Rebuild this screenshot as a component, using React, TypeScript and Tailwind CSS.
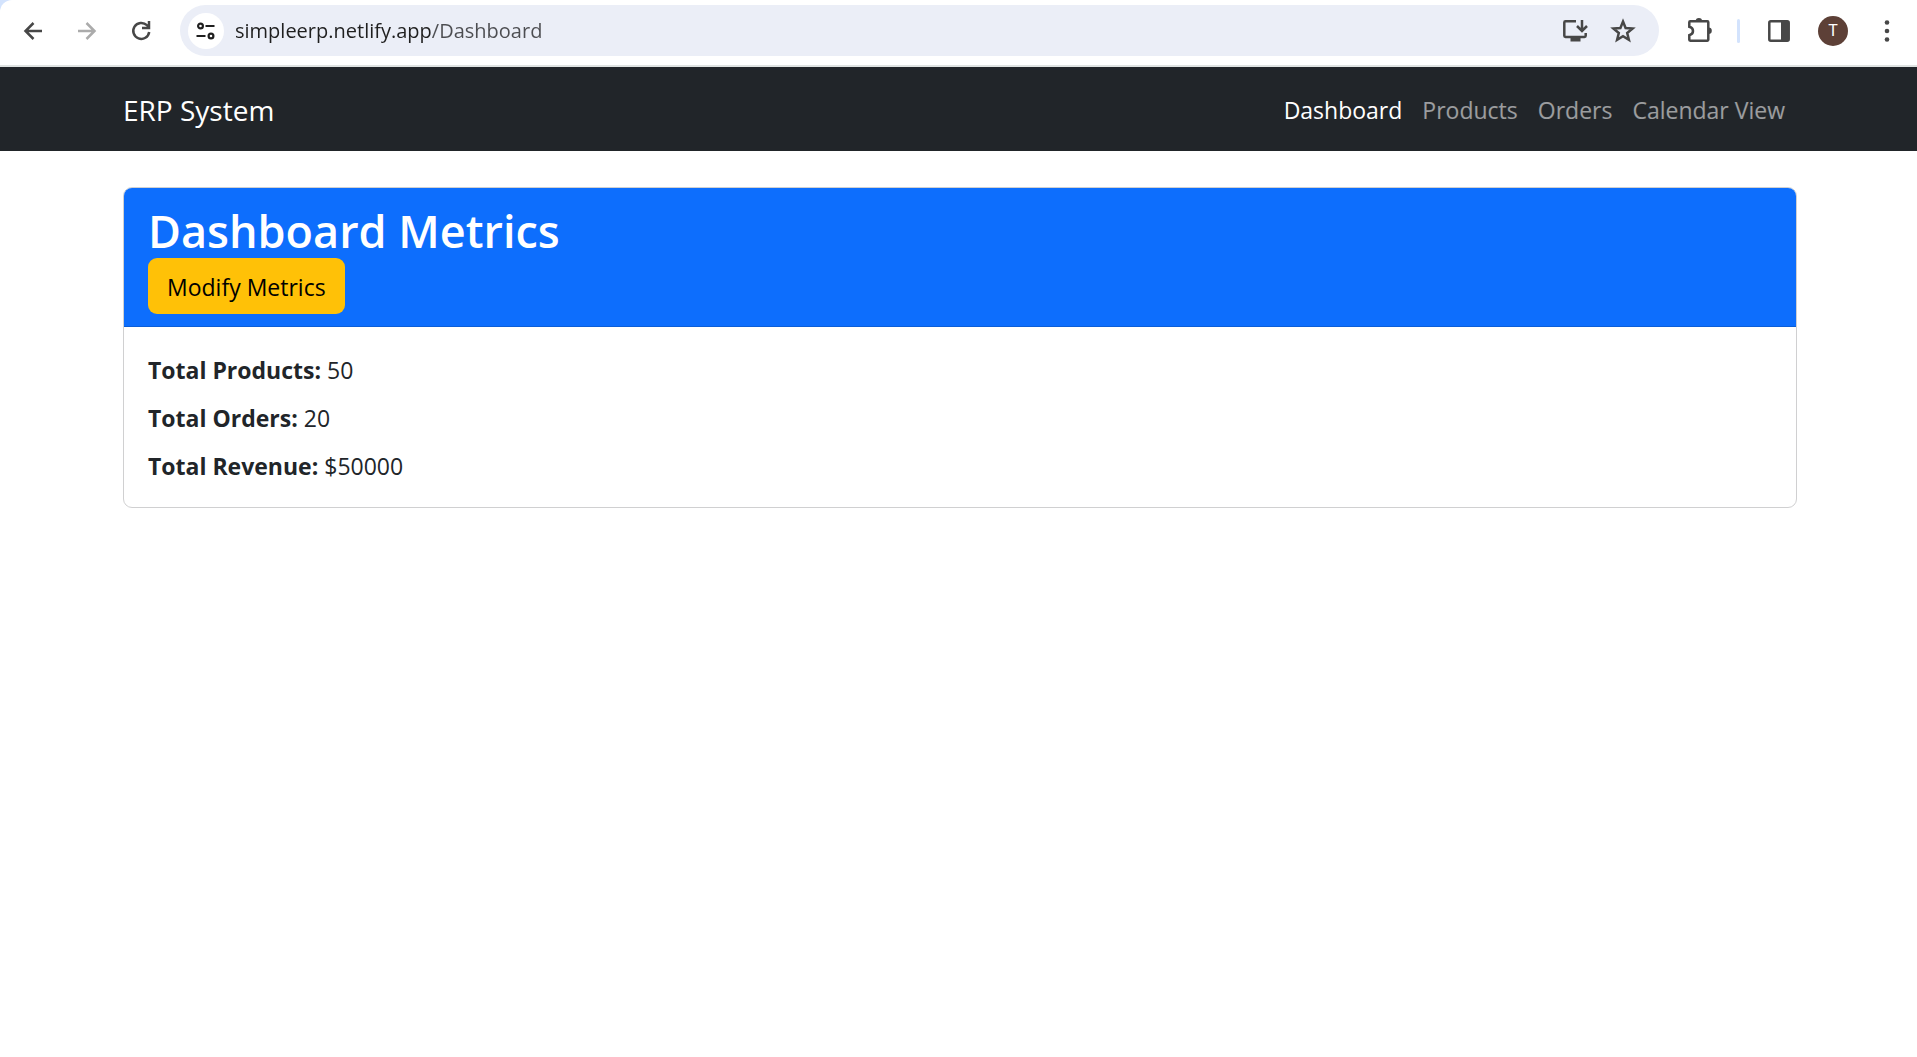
import React from "react";

const iconButton =
  "flex size-9 shrink-0 items-center justify-center rounded-full text-[#474747] hover:bg-black/5";

function BackIcon() {
  return (
    <svg width="20" height="20" viewBox="0 0 20 20" fill="none" stroke="currentColor" strokeWidth="2.5">
      <path d="M19 10H3M10.5 2l-8 8 8 8" />
    </svg>
  );
}

function ForwardIcon() {
  return (
    <svg width="20" height="20" viewBox="0 0 20 20" fill="none" stroke="currentColor" strokeWidth="2.5">
      <path d="M1 10h16M9.5 2l8 8-8 8" />
    </svg>
  );
}

function ReloadIcon() {
  return (
    <svg width="22" height="22" viewBox="0 0 22 22" fill="none" stroke="currentColor" strokeWidth="2.5">
      <path d="M19.200 12a8 8 0 1 1-2.300-6.800l1.600 1.800" />
      <path d="M19 1v7h-7" />
    </svg>
  );
}

function TuneIcon() {
  return (
    <svg width="20" height="20" viewBox="0 0 20 20" fill="none" stroke="currentColor" strokeWidth="2.2">
      <circle cx="4.500" cy="5" r="2.400" />
      <circle cx="15" cy="15" r="2.400" />
      <path d="M9.500 5h9M.5 15h9" />
    </svg>
  );
}

function InstallIcon() {
  return (
    <svg width="26" height="24" viewBox="0 0 26 24" fill="none" stroke="currentColor" strokeWidth="2.5">
      <path d="M14 2.300H3.500q-1.200 0-1.200 1.200v13.200q0 1.200 1.200 1.200h19q1.200 0 1.200-1.200V14" />
      <path d="M20 1v10M15 7l5 5 5-5" />
      <path d="M8.500 18h10v4.500h-10z" fill="currentColor" stroke="none" />
    </svg>
  );
}

function StarIcon() {
  return (
    <svg width="26" height="26" viewBox="0 0 26 26" fill="none" stroke="currentColor" strokeWidth="2.5">
      <path d="M13 3.500l2.600 6.500 7 .5-5.400 4.500 1.700 6.800L13 18.200l-5.900 3.600 1.700-6.800-5.400-4.500 7-.5z" />
    </svg>
  );
}

function ExtensionsIcon() {
  return (
    <svg width="26" height="26" viewBox="0 0 26 26" fill="none" stroke="currentColor" strokeWidth="2.5">
      <path d="M2.300 4.200q0-.9.900-.9h17.200q.9 0 .9.900v17.600q0 .9-.9.900H3.200q-.9 0-.9-.9v-4.600q3.700-1 3.700-4.200t-3.700-4.200z" />
      <path d="M8.700 3a3.200 3 0 0 1 6.400 0zM21.500 9.500a3.300 3.300 0 0 1 0 6.600z" fill="currentColor" stroke="none" />
    </svg>
  );
}

function SidePanelIcon() {
  return (
    <svg width="22" height="22" viewBox="0 0 22 22">
      <rect x="1.300" y="1.300" width="19.400" height="19.400" rx="1.500" fill="none" stroke="currentColor" strokeWidth="2.5" />
      <path d="M13 1h8v20h-8z" fill="currentColor" />
    </svg>
  );
}

function MenuIcon() {
  return (
    <svg width="6" height="24" viewBox="0 0 6 24" fill="currentColor">
      <circle cx="3" cy="3.500" r="2.300" />
      <circle cx="3" cy="12" r="2.300" />
      <circle cx="3" cy="20.500" r="2.300" />
    </svg>
  );
}

function BrowserBar() {
  return (
    <div className="bg-[#d3e3fd]">
      <header className="flex items-center rounded-tl-xl border-b-2 border-[#dfe3e2] bg-white pt-[5px] pr-3 pb-[9px] pl-[15px]">
        <div className="flex gap-[18px]">
          <button type="button" aria-label="Back" className={iconButton}>
            <BackIcon />
          </button>
          <button type="button" aria-label="Forward" disabled className="flex size-9 shrink-0 items-center justify-center text-[#ababab]">
            <ForwardIcon />
          </button>
          <button type="button" aria-label="Reload" className={iconButton}>
            <ReloadIcon />
          </button>
        </div>
        <div className="ml-[21px] flex h-[51px] min-w-0 flex-1 items-center rounded-full bg-[#ebeef7] pr-[18px] pl-2">
          <button
            type="button"
            aria-label="View site information"
            className="flex size-9 shrink-0 items-center justify-center rounded-full bg-white text-[#1f1f1f]"
          >
            <TuneIcon />
          </button>
          <input
            type="text"
            aria-label="Address"
            defaultValue="simpleerp.netlify.app/Dashboard"
            className="ml-[11px] h-9 min-w-0 flex-1 bg-[linear-gradient(to_right,#1f1f1f_196px,#4c4d51_196px)] bg-clip-text text-[20px] text-transparent caret-black outline-none"
          />
          <div className="flex gap-3">
            <button type="button" aria-label="Install app" className={iconButton}>
              <InstallIcon />
            </button>
            <button type="button" aria-label="Bookmark this page" className={iconButton}>
              <StarIcon />
            </button>
          </div>
        </div>
        <div className="ml-[23px] flex items-center">
          <button type="button" aria-label="Extensions" className={iconButton}>
            <ExtensionsIcon />
          </button>
          <span className="ml-[19px] h-6 w-[3px] rounded-full bg-[#d3e3fd]" />
          <button type="button" aria-label="Side panel" className={iconButton + " ml-[21px]"}>
            <SidePanelIcon />
          </button>
          <button
            type="button"
            aria-label="Profile"
            className="ml-[21px] flex size-[30px] items-center justify-center rounded-full bg-[#5d4037] font-['Roboto',sans-serif] text-base text-white"
          >
            T
          </button>
          <button type="button" aria-label="Browser menu" className={iconButton + " ml-[21px]"}>
            <MenuIcon />
          </button>
        </div>
      </header>
    </div>
  );
}

const links = ["Products", "Orders", "Calendar View"];

function NavBar() {
  return (
    <nav className="bg-[#212529] py-3 pl-[3px]">
      <div className="mx-auto flex h-[60px] max-w-[1674px] items-center justify-between pt-0.5">
        <a href="#home" className="text-[28px] text-white">
          ERP System
        </a>
        <ul className="flex gap-5 pr-3 text-[23px]">
          <li>
            <a href="#dashboard" aria-current="page" className="text-white">
              Dashboard
            </a>
          </li>
          {links.map((label) => (
            <li key={label}>
              <a href="#section" className="text-white/55">
                {label}
              </a>
            </li>
          ))}
        </ul>
      </div>
    </nav>
  );
}

const metrics = [
  { label: "Total Products:", value: "50" },
  { label: "Total Orders:", value: "20" },
  { label: "Total Revenue:", value: "$50000" },
];

function MetricsCard() {
  return (
    <section className="mx-auto max-w-[1674px] overflow-hidden rounded-[9px] border border-[#d0d0d1] bg-white">
      <div className="border-b border-[#0b5ed7] bg-[#0d6efd] px-6 pt-4 pb-3">
        <h1 className="text-[45px] leading-[54px] font-semibold text-white">Dashboard Metrics</h1>
        <button type="button" className="flex h-14 items-center rounded-[9px] bg-[#ffc107] px-[19px] pt-0.5 text-[23px] text-black">
          Modify Metrics
        </button>
      </div>
      <div className="flex flex-col gap-3 px-6 pt-[25px] pb-[23px] text-[23px] leading-9">
        {metrics.map((metric) => (
          <p key={metric.label}>
            <strong className="font-bold">{metric.label}</strong> {metric.value}
          </p>
        ))}
      </div>
    </section>
  );
}

export default function App() {
  return (
    <div className="min-h-screen bg-white font-['Open_Sans',sans-serif] text-[#212529]">
      <BrowserBar />
      <NavBar />
      <main className="pt-9 pl-[3px]">
        <MetricsCard />
      </main>
    </div>
  );
}
